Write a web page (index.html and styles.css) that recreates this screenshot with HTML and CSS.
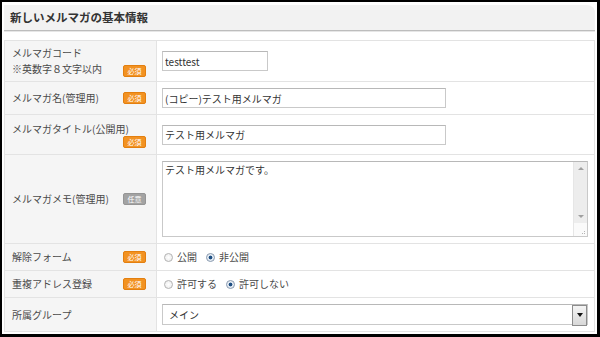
FILE: index.html
```html
<!DOCTYPE html>
<html lang="ja">
<head>
    <meta charset="UTF-8">
    <meta name="viewport" content="width=device-width, initial-scale=1.0">
    <title>メルマガ基本情報</title>
    <link rel="stylesheet" href="styles.css">
</head>
<body>
    <div class="frame">
        <!-- Section header -->
        <h2 class="section-title">新しいメルマガの基本情報</h2>

        <!-- Basic info form -->
        <table class="form-table">
            <tr class="row-code">
                <th>
                    <div class="label label-bottom">
                        <span>メルマガコード<br>※英数字８文字以内</span>
                        <span class="badge">必須</span>
                    </div>
                </th>
                <td><input type="text" class="input-short" value="testtest"></td>
            </tr>
            <tr class="row-name">
                <th>
                    <div class="label">
                        <span>メルマガ名(管理用)</span>
                        <span class="badge">必須</span>
                    </div>
                </th>
                <td><input type="text" class="input-mid" value="(コピー)テスト用メルマガ"></td>
            </tr>
            <tr class="row-title">
                <th>
                    <div class="label">
                        <span>メルマガタイトル(公開用)</span>
                        <span class="badge">必須</span>
                    </div>
                </th>
                <td><input type="text" class="input-mid" value="テスト用メルマガ"></td>
            </tr>
            <tr class="row-memo">
                <th>
                    <div class="label">
                        <span>メルマガメモ(管理用)</span>
                        <span class="badge badge-optional">任意</span>
                    </div>
                </th>
                <td>
                    <div class="memo-box">
                        <textarea class="memo">テスト用メルマガです。</textarea>
                        <div class="memo-scroll">
                            <span class="scroll-btn"><span class="arrow-up"></span></span>
                            <span class="scroll-track"></span>
                            <span class="scroll-btn"><span class="arrow-down"></span></span>
                            <span class="scroll-grip"></span>
                        </div>
                    </div>
                </td>
            </tr>
            <tr class="row-radio">
                <th>
                    <div class="label">
                        <span>解除フォーム</span>
                        <span class="badge">必須</span>
                    </div>
                </th>
                <td>
                    <div class="radio-group">
                        <label><input type="radio" name="form"> 公開</label>
                        <label><input type="radio" name="form" checked> 非公開</label>
                    </div>
                </td>
            </tr>
            <tr class="row-radio">
                <th>
                    <div class="label">
                        <span>重複アドレス登録</span>
                        <span class="badge">必須</span>
                    </div>
                </th>
                <td>
                    <div class="radio-group">
                        <label><input type="radio" name="dup"> 許可する</label>
                        <label><input type="radio" name="dup" checked> 許可しない</label>
                    </div>
                </td>
            </tr>
            <tr class="row-group">
                <th>
                    <div class="label">
                        <span>所属グループ</span>
                    </div>
                </th>
                <td>
                    <div class="select-wrap">
                        <select>
                            <option>メイン</option>
                        </select>
                    </div>
                </td>
            </tr>
        </table>
    </div>
</body>
</html>
```

FILE: styles.css
```css
/* General Reset */
* {
    margin: 0;
    padding: 0;
    box-sizing: border-box;
}

body {
    font-family: "Noto Sans CJK JP", "Noto Sans", sans-serif;
    background-color: #fff;
    color: #4a4a4a;
}

.frame {
    width: 600px;
    height: 337px;
    border-style: solid;
    border-color: #000;
    border-width: 2px 3px 3px 2px;
    padding: 3px 2px 0 2px;
    background-color: #fff;
}

/* Section header */
.section-title {
    height: 26px;
    padding-left: 6px;
    font-size: 11.5px;
    line-height: 25px;
    font-weight: bold;
    color: #333;
    background-color: #f2f2f2;
    border-bottom: 1px solid #bdbdbd;
    border-top-right-radius: 8px;
    box-shadow: 0 1px 0 #e6e6e6;
    margin-bottom: 9px;
}

/* Form table */
.form-table {
    width: 100%;
    border-collapse: collapse;
    font-size: 10px;
    line-height: 16px;
}

.form-table th,
.form-table td {
    border: 1px solid #e3e3e3;
    vertical-align: middle;
}

.form-table th {
    width: 153px;
    padding: 0 10px 0 7px;
    background-color: #f5f5f5;
    font-weight: normal;
    text-align: left;
    color: #4a4a4a;
}

.form-table td {
    padding: 0 6px 0 5px;
    background-color: #fff;
}

.row-code th { height: 41px; }
.row-name th { height: 33px; }
.row-title th { height: 40px; }
.row-memo th { height: 89px; }
.row-radio th { height: 27px; }
.row-group th { height: 34px; }

.label {
    display: flex;
    flex-wrap: wrap;
    align-items: center;
    justify-content: space-between;
}

.label-bottom {
    align-items: flex-end;
}

.row-title .label {
    line-height: 15px;
}

.badge {
    display: inline-block;
    margin-left: auto;
    width: 23px;
    height: 12px;
    line-height: 11px;
    font-size: 7px;
    text-align: center;
    color: #fff;
    background-color: #f29222;
    border: 1px solid #e37f0f;
    border-radius: 2px;
}

.badge-optional {
    background-color: #a3a3a3;
    border-color: #959595;
}

/* Inputs */
input[type="text"],
.memo-box,
select {
    font-family: "Noto Sans CJK JP", "Noto Sans", sans-serif;
    font-size: 10px;
    color: #333;
    border: 1px solid #c9c9c9;
    border-top-color: #b8b8b8;
    background-color: #fff;
}

input[type="text"] {
    display: block;
    height: 20px;
    padding: 0 2px;
}

.input-short {
    width: 106px;
}

.input-mid {
    width: 284px;
}

/* Memo textarea with a classic scrollbar column */
.memo-box {
    display: flex;
    width: 426px;
    height: 76px;
}

.memo {
    flex: 1;
    border: none;
    outline: none;
    resize: none;
    overflow: hidden;
    padding: 1px 2px;
    font-family: inherit;
    font-size: 10px;
    line-height: 14px;
    color: #333;
}

.memo-scroll {
    width: 14px;
    display: flex;
    flex-direction: column;
    background-color: #fafafa;
    border-left: 1px solid #e6e6e6;
}

.scroll-btn {
    height: 13px;
    display: flex;
    align-items: center;
    justify-content: center;
    background-color: #ededed;
}

.scroll-track {
    flex: 1;
    background-color: #ededed;
}

.arrow-up,
.arrow-down {
    width: 0;
    height: 0;
    border-left: 3px solid transparent;
    border-right: 3px solid transparent;
}

.arrow-up {
    border-bottom: 3px solid #a0a0a0;
}

.arrow-down {
    border-top: 3px solid #a0a0a0;
}

.scroll-grip {
    height: 13px;
    background-image:
        linear-gradient(#b5b5b5, #b5b5b5),
        linear-gradient(#b5b5b5, #b5b5b5),
        linear-gradient(#b5b5b5, #b5b5b5);
    background-size: 1px 1px;
    background-repeat: no-repeat;
    background-position: right 2px bottom 2px, right 4px bottom 2px, right 2px bottom 4px;
}

/* Radios */
.radio-group {
    display: flex;
    gap: 9px;
    padding-left: 2px;
}

.radio-group label {
    display: flex;
    align-items: center;
    gap: 4px;
}

.radio-group input {
    appearance: none;
    width: 9px;
    height: 9px;
    border: 1px solid #b4b4b4;
    border-radius: 50%;
    background: radial-gradient(circle, #fff 0, #e9e9e9 100%);
}

.radio-group input:checked {
    border-color: #8a9bb0;
    background: radial-gradient(circle, #1f4f82 0, #1f4f82 1.6px, #dfe8f2 2.2px, #f6f6f6 100%);
}

/* Select */
.select-wrap {
    position: relative;
    width: 426px;
}

.select-wrap select {
    appearance: none;
    display: block;
    width: 100%;
    height: 21px;
    padding: 0 6px;
    border-radius: 0;
}

.select-wrap::after {
    content: "";
    position: absolute;
    top: 1px;
    right: 1px;
    width: 13px;
    height: 19px;
    border: 1px solid #8c8c8c;
    background: linear-gradient(#f4f4f4, #d8d8d8);
}

.select-wrap::before {
    content: "";
    position: absolute;
    z-index: 1;
    top: 9px;
    right: 5px;
    border-left: 3px solid transparent;
    border-right: 3px solid transparent;
    border-top: 4px solid #111;
}
```
